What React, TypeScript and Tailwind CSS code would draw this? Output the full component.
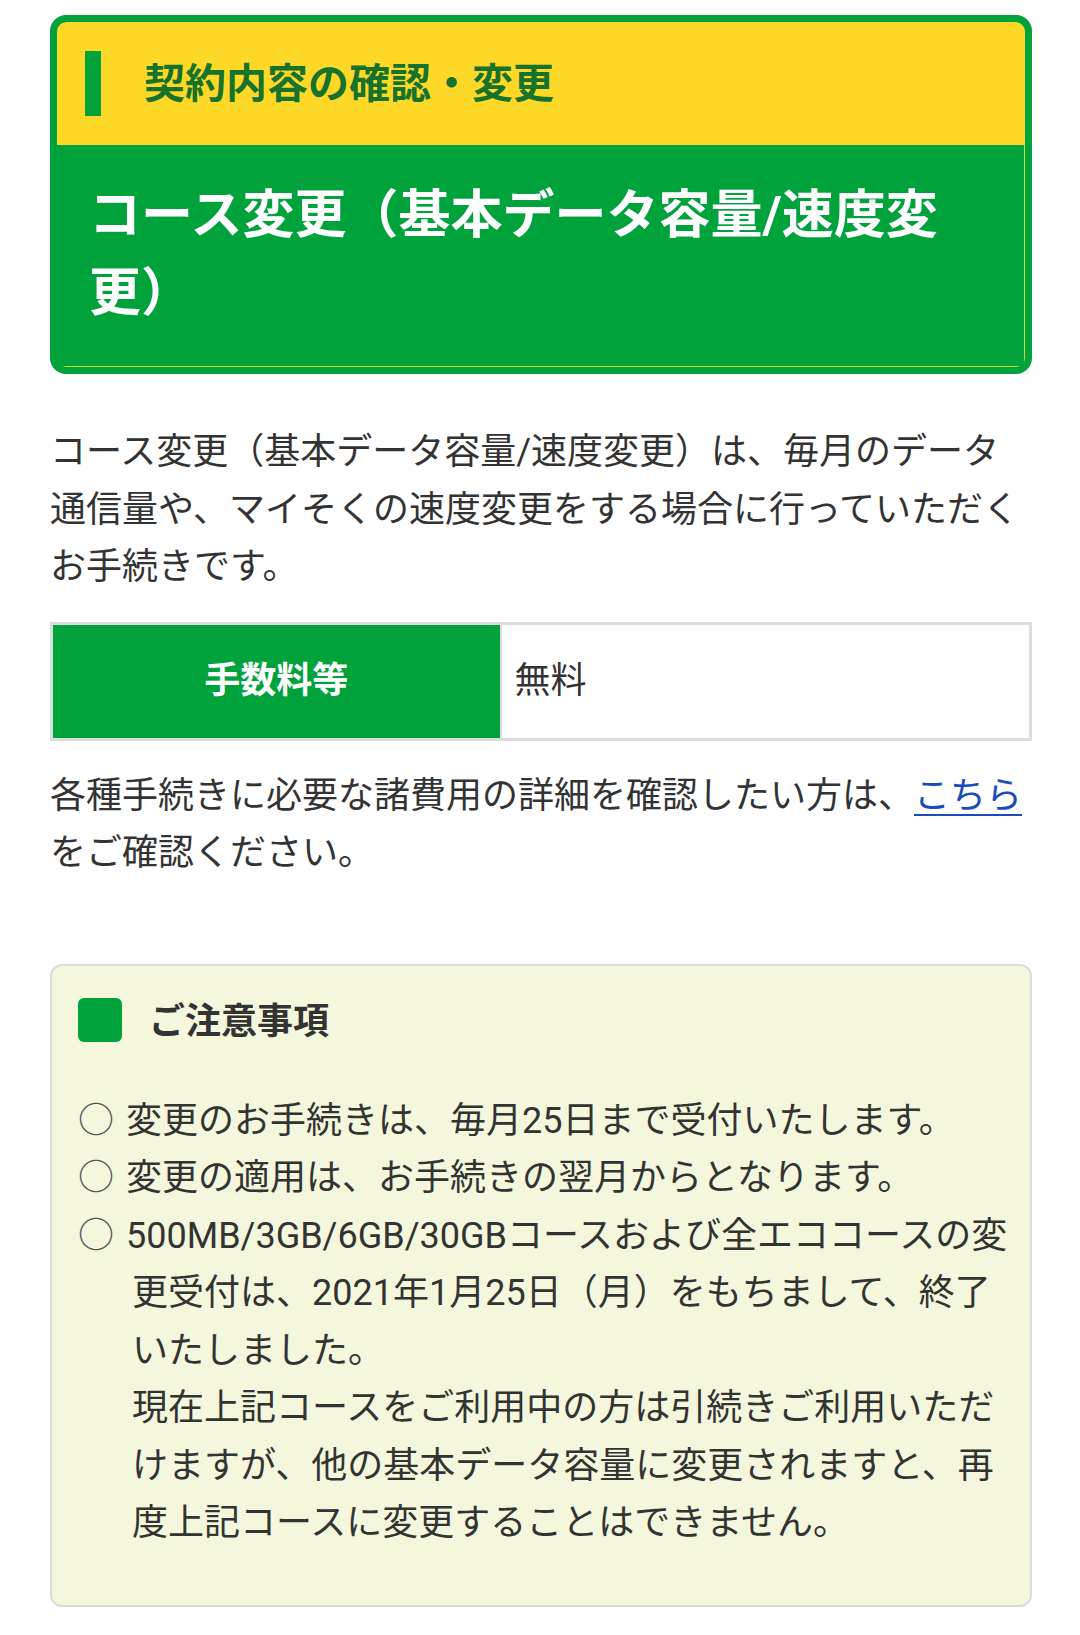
const notes = [
  "変更のお手続きは、毎月25日まで受付いたします。",
  "変更の適用は、お手続きの翌月からとなります。",
];

const App = () => {
  return (
    <div className="w-[1080px] min-h-[1635px] bg-white pl-[50px] pr-[48px] pt-[15px] pb-[30px] text-[#333] font-['Roboto','Noto_Sans_CJK_JP',sans-serif]">
      {/* Header */}
      <div className="border-[7px] border-[#00a23c] rounded-[16px] overflow-hidden bg-[#00a23c]">
        <div className="flex items-center bg-[#fdd826] rounded-t-[9px] py-[29px] pl-[28px]">
          <span className="block w-[16px] h-[65px] bg-[#00a23c]" />
          <h2 className="ml-[43px] text-[41px] leading-[60px] font-bold text-[#17722c]">
            契約内容の確認・変更
          </h2>
        </div>
        <h1 className="bg-[#00a23c] border-r border-b border-[#c9dc3a] pt-[32px] pb-[33px] pl-[32px] pr-[60px] text-[52px] leading-[78px] font-bold text-white">
          コース変更（基本データ容量/速度変更）
        </h1>
      </div>

      {/* Description */}
      <p className="mt-[50px] text-[36px] leading-[57.5px]">
        コース変更（基本データ容量/速度変更）は、毎月のデータ通信量や、マイそくの速度変更をする場合に行っていただくお手続きです。
      </p>

      {/* Fee table */}
      <table className="mt-[25px] w-full border-collapse border-[3px] border-[#dddddd]">
        <tbody>
          <tr className="h-[116px]">
            <th className="w-[449px] bg-[#00a23c] text-white text-[36px] font-bold text-center border-r-2 border-[#dddddd]">
              手数料等
            </th>
            <td className="pl-[13px] text-[36px] text-left">無料</td>
          </tr>
        </tbody>
      </table>

      <p className="mt-[27px] text-[36px] leading-[57.5px]">
        各種手続きに必要な諸費用の詳細を確認したい方は、
        <a href="#" className="text-[#1c4cbb] underline underline-offset-[6px] decoration-2">
          こちら
        </a>
        をご確認ください。
      </p>

      {/* Notice box */}
      <div className="mt-[81px] bg-[#f4f7dc] border-2 border-[#dcdcdc] rounded-[12px] pt-[30px] pb-[52px] pl-[26px] pr-[14px]">
        <div className="flex items-center">
          <span className="block w-[44px] h-[44px] rounded-[6px] bg-[#00a23c]" />
          <h3 className="ml-[27px] text-[36px] leading-[48px] font-bold text-[#333] translate-y-[2px]">
            ご注意事項
          </h3>
        </div>
        <ul className="mt-[49px] text-[36px] leading-[57.5px]">
          {notes.map((note, i) => (
            <li key={i} className="pl-[54px] -indent-[54px]">
              <span className="inline-block w-[48px] indent-0 text-[#555]">○</span>
              {note}
            </li>
          ))}
          <li className="pl-[54px] -indent-[54px]">
            <span className="inline-block w-[48px] indent-0 text-[#555]">○</span>
            500MB/3GB/6GB/30GBコースおよび全エココースの変更受付は、2021年1月25日（月）をもちまして、終了いたしました。
            <br />
            現在上記コースをご利用中の方は引続きご利用いただけますが、他の基本データ容量に変更されますと、再度上記コースに変更することはできません。
          </li>
        </ul>
      </div>
    </div>
  );
};

export default App;
